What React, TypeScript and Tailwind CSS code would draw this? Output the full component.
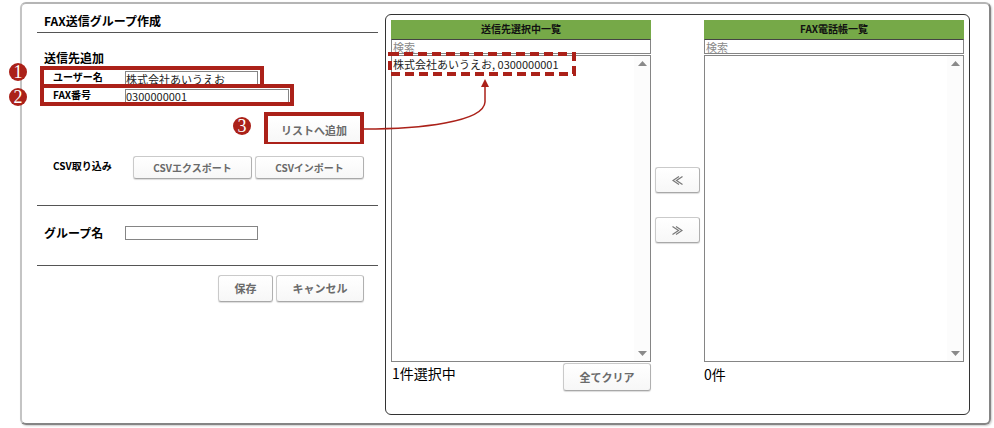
import type { ReactNode } from "react";
import clsx from "clsx";

const BUTTON =
  "rounded-[3px] border border-[#cacaca] border-r-[#b0b0b0] border-b-[#a8a8a8] bg-linear-to-b from-white to-[#f7f7f7] font-bold text-[#6a6a6a] shadow-[0_1px_1px_#dcdcdc]";
const INPUT =
  "border border-[#858585] bg-white text-[11px] leading-3 text-[#222] outline-none";

function StepBadge({ step, className }: { step: number; className: string }) {
  return (
    <span
      className={clsx(
        "absolute z-20 flex size-[18px] items-center justify-center rounded-full bg-[#ab2119] font-['Liberation_Serif',serif] text-lg leading-none text-white",
        className,
      )}
    >
      {step}
    </span>
  );
}

function MarkedRow({ className, children }: { className: string; children: ReactNode }) {
  return (
    <div
      className={clsx(
        "relative ml-[3px] flex h-[22px] items-start overflow-hidden border-4 border-[#ab2119] pt-px pl-[9px]",
        className,
      )}
    >
      {children}
    </div>
  );
}

function ScrollTrack() {
  return (
    <div className="flex w-4 flex-col items-center justify-between bg-[#fcfcfc] py-[5px]">
      <svg width="9" height="5" viewBox="0 0 9 5" aria-hidden="true">
        <path d="M0 5 4.5 0 9 5Z" fill="#8a8a8a" />
      </svg>
      <svg width="9" height="5" viewBox="0 0 9 5" aria-hidden="true">
        <path d="M0 0 4.5 5 9 0Z" fill="#8a8a8a" />
      </svg>
    </div>
  );
}

function AddressList({
  title,
  items,
  children,
}: {
  title: string;
  items: string[];
  children: ReactNode;
}) {
  return (
    <section className="flex min-w-0 flex-1 flex-col">
      <h2 className="bg-[#76a948] pb-px text-center text-[10px] leading-[18px] font-bold text-[#111]">
        {title}
      </h2>
      <input
        type="search"
        aria-label={`${title} 検索`}
        placeholder="検索"
        className="h-[15px] w-full border border-[#858585] border-t-[#444] pl-px text-[11px] leading-3 outline-none placeholder:text-[#8a8a8a]"
      />
      <div className="mt-px flex h-[307px] border border-[#858585]">
        <select
          multiple
          aria-label={title}
          className="min-w-0 flex-1 appearance-none overflow-hidden text-[11px] text-[#222] outline-none"
        >
          {items.map((item) => (
            <option key={item} className="px-px py-0 leading-[18px]">
              {item}
            </option>
          ))}
        </select>
        <ScrollTrack />
      </div>
      <div className="flex items-start justify-between">{children}</div>
    </section>
  );
}

export default function App() {
  return (
    <div className="bg-white pt-[2px] pr-[3px] pb-1 pl-5 font-['Noto_Sans_CJK_JP',sans-serif] text-black">
      <main className="relative flex gap-[7px] rounded-md border-2 border-t-[#b5b5b5] border-r-[#858585] border-b-[#858585] border-l-[#c4c4c4] pt-[10px] pr-[19px] pb-2 pl-[15px] shadow-[1px_1px_2px_#ccc]">
        <form className="w-[341px] shrink-0" onSubmit={(e) => e.preventDefault()}>
          <h1 className="-mt-[3px] border-b border-[#555] pb-px pl-[7px] text-xs leading-5 font-bold">
            FAX送信グループ作成
          </h1>

          <h2 className="mt-4 pl-[7px] text-xs leading-[17px] font-bold">送信先追加</h2>
          <MarkedRow className="w-[224px]">
            <label htmlFor="user-name" className="w-[72px] text-[10px] leading-3 font-bold">
              ユーザー名
            </label>
            <input
              id="user-name"
              defaultValue="株式会社あいうえお"
              className={clsx(INPUT, "h-4 w-[133px]")}
            />
          </MarkedRow>
          <MarkedRow className="-mt-1 w-[254px]">
            <label htmlFor="fax-number" className="w-[72px] text-[10px] leading-3 font-bold">
              FAX番号
            </label>
            <input
              id="fax-number"
              defaultValue="0300000001"
              className={clsx(INPUT, "h-[14px] w-[164px]")}
            />
          </MarkedRow>
          <div className="mt-[6px] mr-[14px] flex justify-end">
            <div className="h-8 w-[100px] border-4 border-[#ab2119]">
              <button
                type="button"
                className="size-full bg-linear-to-b from-white to-[#f7f7f7] text-[11px] font-bold text-[#6a6a6a]"
              >
                リストへ追加
              </button>
            </div>
          </div>

          <div className="mt-3 mr-[14px] flex items-center gap-[3px] pl-4">
            <span className="flex-1 pb-1 text-[10px] leading-4 font-bold">CSV取り込み</span>
            <button type="button" className={clsx(BUTTON, "h-[23px] w-[119px] pb-px text-[10px]")}>
              CSVエクスポート
            </button>
            <button type="button" className={clsx(BUTTON, "h-[23px] w-[109px] pb-px text-[10px]")}>
              CSVインポート
            </button>
          </div>

          <div className="mt-[26px] flex h-[61px] items-center border-y border-[#555] pb-[5px] pl-[7px]">
            <label htmlFor="group-name" className="w-[81px] text-xs font-bold">
              グループ名
            </label>
            <input id="group-name" className={clsx(INPUT, "h-[14px] w-[133px]")} />
          </div>

          <div className="mt-[9px] mr-[14px] flex justify-end gap-[3px]">
            <button type="submit" className={clsx(BUTTON, "h-[27px] w-[55px] text-[11px]")}>
              保存
            </button>
            <button type="button" className={clsx(BUTTON, "h-[27px] w-[88px] text-[11px]")}>
              キャンセル
            </button>
          </div>
        </form>

        <div className="flex min-w-0 flex-1 gap-1 rounded-md border border-[#333] px-[5px] pt-[5px] pb-[23px]">
          <AddressList title="送信先選択中一覧" items={["株式会社あいうえお, 0300000001"]}>
            <p className="pl-px text-sm leading-[22px]">1件選択中</p>
            <button type="button" className={clsx(BUTTON, "mt-px h-7 w-[88px] text-[11px]")}>
              全てクリア
            </button>
          </AddressList>
          <div className="flex w-[45px] shrink-0 flex-col gap-6 pt-[147px]">
            <button
              type="button"
              aria-label="選択に追加"
              className={clsx(BUTTON, "flex h-[26px] items-center justify-center")}
            >
              <svg width="11" height="9" viewBox="0 0 11 9" fill="none" stroke="#777" strokeWidth="1.2" aria-hidden="true">
                <path d="M7 .5 1 4.5 7 8.5M10.5.5 4.5 4.5 10.5 8.5" />
              </svg>
            </button>
            <button
              type="button"
              aria-label="選択から外す"
              className={clsx(BUTTON, "flex h-[26px] items-center justify-center")}
            >
              <svg width="11" height="9" viewBox="0 0 11 9" fill="none" stroke="#777" strokeWidth="1.2" aria-hidden="true">
                <path d="M.5.5 6.5 4.5.5 8.5M4 .5 10 4.5 4 8.5" />
              </svg>
            </button>
          </div>
          <AddressList title="FAX電話帳一覧" items={[]}>
            <p className="text-sm leading-6">0件</p>
          </AddressList>
        </div>

        {/* Step callouts */}
        <StepBadge step={1} className="top-[59px] -left-[13px]" />
        <StepBadge step={2} className="top-[84px] -left-[13px]" />
        <StepBadge step={3} className="top-[113px] left-[211px]" />
        <svg
          className="pointer-events-none absolute top-[46px] left-[366px]"
          width="190"
          height="84"
          viewBox="0 0 190 84"
          fill="none"
          aria-hidden="true"
        >
          <rect x="2" y="4" width="184" height="20" stroke="#ab2119" strokeWidth="4" strokeDasharray="9 5" />
        </svg>
        <svg
          className="pointer-events-none absolute top-[70px] left-[340px]"
          width="134"
          height="62"
          viewBox="0 0 134 62"
          fill="none"
          aria-hidden="true"
        >
          <path d="M2 55C58 55 122 48 123 28V12" stroke="#ab2119" strokeWidth="1.5" />
          <path d="M119 13 123 5 127 13Z" fill="#ab2119" />
        </svg>
      </main>
    </div>
  );
}
